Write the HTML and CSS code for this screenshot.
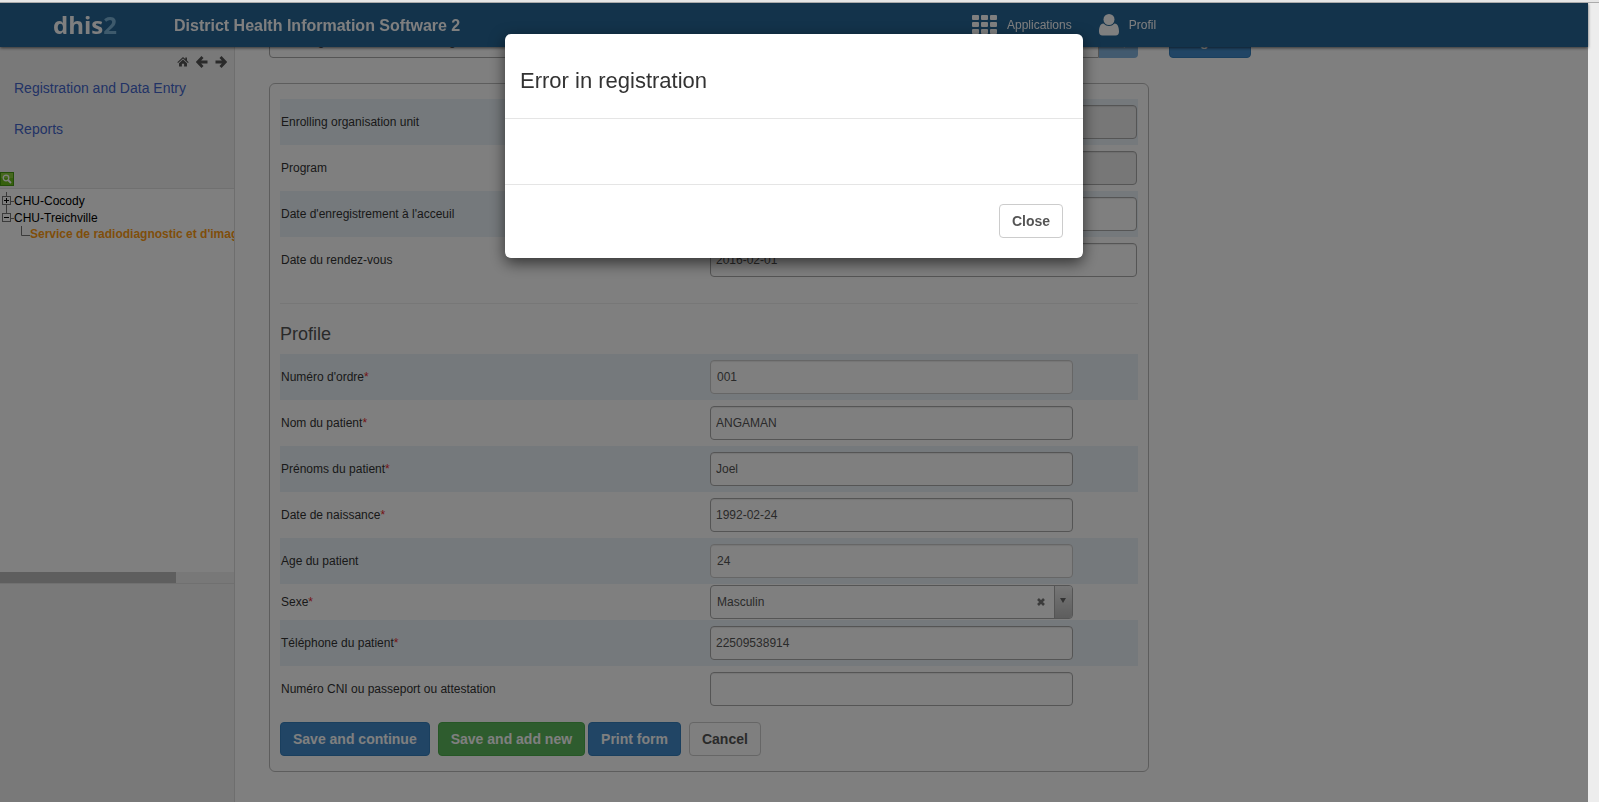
FILE: index.html
```html
<!DOCTYPE html>
<html lang="fr">
<head>
    <meta charset="UTF-8">
    <meta name="viewport" content="width=device-width, initial-scale=1" />
    <title>District Health Information Software 2</title>
    <link rel="stylesheet" href="styles.css">
</head>
<body>

<header id="header">
    <a href="#" class="logo">dhis<span>2</span></a>
    <span class="title">District Health Information Software 2</span>
    <nav class="menu">
        <a href="#">
            <svg width="25" height="20" viewBox="0 0 25 20" fill="#fff">
                <rect x="0" y="0" width="7" height="5" rx="1"/><rect x="9" y="0" width="7" height="5" rx="1"/><rect x="18" y="0" width="7" height="5" rx="1"/>
                <rect x="0" y="7" width="7" height="5" rx="1"/><rect x="9" y="7" width="7" height="5" rx="1"/><rect x="18" y="7" width="7" height="5" rx="1"/>
                <rect x="0" y="14" width="7" height="5" rx="1"/><rect x="9" y="14" width="7" height="5" rx="1"/><rect x="18" y="14" width="7" height="5" rx="1"/>
            </svg>
            Applications
        </a>
        <a href="#">
            <svg width="20" height="22" viewBox="0 0 20 22" fill="#fff">
                <circle cx="10" cy="5.5" r="5.5"/>
                <path d="M4.5 9.500Q7 12 10 12T15.500 9.500C19 9.500 20 14 20 17.500Q20 21.500 16.500 21.500H3.500Q0 21.500 0 17.500C0 14 1 9.500 4.500 9.500Z"/>
            </svg>
            Profil
        </a>
    </nav>
</header>

<div id="layout">
    <aside id="sidebar">
        <div class="nav-icons">
            <a href="#" aria-label="Home"><svg width="12" height="12" viewBox="0 0 13 12" fill="#555"><path d="M6.500 0.500L0.300 6.200L1.200 7.100L6.500 2.300L11.800 7.100L12.700 6.200L10.800 4.500V1H9V2.800Z"/><path d="M6.500 3.400L2.200 7.300V11H5.300V7.800H7.700V11H10.800V7.300Z"/></svg></a>
            <a href="#" aria-label="Back"><svg width="12" height="12" viewBox="0 0 12 12" fill="none" stroke="#555" stroke-width="2.800"><path d="M6.500 1L1.800 6L6.500 11M2 6H11.500"/></svg></a>
            <a href="#" aria-label="Forward"><svg width="12" height="12" viewBox="0 0 12 12" fill="none" stroke="#555" stroke-width="2.800"><path d="M5.500 1L10.200 6L5.500 11M10 6H0.500"/></svg></a>
        </div>
        <ul class="links">
            <li><a href="#">Registration and Data Entry</a></li>
            <li><a href="#">Reports</a></li>
        </ul>
        <button type="button" class="find" aria-label="Search">
            <svg width="14" height="14" viewBox="0 0 14 14"><rect x=".5" y=".5" width="13" height="13" fill="#6cc01c" stroke="#469c10"/><rect x="1" y="1" width="12" height="5" fill="#8cd03c"/><circle cx="6" cy="6" r="2.800" fill="none" stroke="#fff" stroke-width="1.300"/><path d="M8 8L11 11" stroke="#fff" stroke-width="1.800"/></svg>
        </button>
        <div class="tree">
            <ul>
                <li>
                    <svg width="14" height="17" viewBox="0 0 14 17" fill="none"><path d="M6.500 0V4M6.500 13V17M11 9.500H14" stroke="#777"/><rect x="2.500" y="4.500" width="8" height="8" stroke="#777"/><path d="M4 8.500H9M6.500 6V11" stroke="#000"/></svg>
                    <a href="#">CHU-Cocody</a>
                </li>
                <li>
                    <svg width="14" height="17" viewBox="0 0 14 17" fill="none"><path d="M6.500 0V4M11 9.500H14" stroke="#777"/><rect x="2.500" y="4.500" width="8" height="8" stroke="#777"/><path d="M4 8.500H9" stroke="#000"/></svg>
                    <a href="#">CHU-Treichville</a>
                </li>
                <li class="child">
                    <svg width="9" height="16" viewBox="0 0 9 16" fill="none"><path d="M.5 0V9.500H9" stroke="#777"/></svg>
                    <a href="#" class="selected">Service de radiodiagnostic et d'imagerie</a>
                </li>
            </ul>
            <div class="scrollbar"><div class="thumb"></div></div>
        </div>
    </aside>

    <main id="main">
        <div class="toolbar">
            <input type="text" class="form-control program" aria-label="Program list" value="Radiologie et traitement des images">
            <button type="button" class="btn btn-go" aria-label="Search"><svg width="14" height="14" viewBox="0 0 14 14" fill="none" stroke="#fff" stroke-width="2"><circle cx="6" cy="6" r="4.500"/><path d="M9 9L13 13"/></svg></button>
            <button type="button" class="btn btn-primary register">Register</button>
        </div>

        <form class="panel">
            <table class="fields wide">
                <tr>
                    <td><label for="orgunit">Enrolling organisation unit</label></td>
                    <td><input id="orgunit" type="text" class="form-control" disabled></td>
                </tr>
                <tr>
                    <td><label for="program">Program</label></td>
                    <td><input id="program" type="text" class="form-control" disabled></td>
                </tr>
                <tr>
                    <td><label for="enrolled">Date d'enregistrement à l'acceuil</label></td>
                    <td><input id="enrolled" type="text" class="form-control"></td>
                </tr>
                <tr>
                    <td><label for="appointment">Date du rendez-vous</label></td>
                    <td><input id="appointment" type="text" class="form-control" value="2016-02-01"></td>
                </tr>
            </table>
            <hr>
            <h3>Profile</h3>
            <table class="fields">
                <tr>
                    <td><label for="order">Numéro d'ordre<em>*</em></label></td>
                    <td><input id="order" type="text" class="form-control light" value="001"></td>
                </tr>
                <tr>
                    <td><label for="lastname">Nom du patient<em>*</em></label></td>
                    <td><input id="lastname" type="text" class="form-control" value="ANGAMAN"></td>
                </tr>
                <tr>
                    <td><label for="firstname">Prénoms du patient<em>*</em></label></td>
                    <td><input id="firstname" type="text" class="form-control" value="Joel"></td>
                </tr>
                <tr>
                    <td><label for="birth">Date de naissance<em>*</em></label></td>
                    <td><input id="birth" type="text" class="form-control" value="1992-02-24"></td>
                </tr>
                <tr>
                    <td><label for="age">Age du patient</label></td>
                    <td><input id="age" type="text" class="form-control light" value="24"></td>
                </tr>
                <tr class="tight">
                    <td><label for="sex">Sexe<em>*</em></label></td>
                    <td>
                        <div class="select">
                            <select id="sex"><option>Masculin</option></select>
                            <button type="button" class="clear" aria-label="Clear"><svg width="8" height="8" viewBox="0 0 8 8" stroke="#777" stroke-width="2.600"><path d="M1 1L7 7M7 1L1 7"/></svg></button>
                            <span class="arrow"><svg width="6" height="5" viewBox="0 0 6 5" fill="#666"><path d="M0 0H6L3 5Z"/></svg></span>
                        </div>
                    </td>
                </tr>
                <tr>
                    <td><label for="phone">Téléphone du patient<em>*</em></label></td>
                    <td><input id="phone" type="text" class="form-control" value="22509538914"></td>
                </tr>
                <tr>
                    <td><label for="cni">Numéro CNI ou passeport ou attestation</label></td>
                    <td><input id="cni" type="text" class="form-control"></td>
                </tr>
            </table>
            <div class="actions">
                <button type="button" class="btn btn-primary">Save and continue</button>
                <div class="pair">
                    <button type="button" class="btn btn-success">Save and add new</button>
                    <button type="button" class="btn btn-primary">Print form</button>
                </div>
                <button type="button" class="btn btn-default">Cancel</button>
            </div>
        </form>
    </main>
</div>

<div id="backdrop">
    <div class="modal" role="dialog" aria-labelledby="modal-title">
        <div class="modal-header"><h2 id="modal-title">Error in registration</h2></div>
        <div class="modal-body"></div>
        <div class="modal-footer"><button type="button" class="btn btn-default">Close</button></div>
    </div>
</div>

</body>
</html>
```

FILE: styles.css
```css
*, *::after, *::before {
    box-sizing: border-box;
}

html {
    background: #ededed;
}

body {
    margin: 0 11px 0 0;
    padding-top: 3px;
    font-family: "Liberation Sans", Arial, sans-serif;
    font-size: 12px;
    line-height: 16px;
    color: #333;
}

/* window edge above the page */
body::before {
    content: "";
    position: fixed;
    top: 0;
    left: 0;
    right: 0;
    height: 3px;
    background: #e6e6e6;
    border-bottom: 1px solid #ababab;
    z-index: 20;
}

a {
    color: inherit;
    text-decoration: none;
}

ul {
    list-style: none;
    margin: 0;
    padding: 0;
}

svg {
    display: block;
    flex: none;
}

/* header */

#header {
    position: fixed;
    top: 3px;
    left: 0;
    right: 11px;
    height: 44px;
    display: flex;
    align-items: center;
    background: #276696;
    color: #fff;
    box-shadow: 0 1px 3px rgba(0, 0, 0, 0.6);
    z-index: 5;
}

.logo {
    width: 121px;
    margin-left: 53px;
    font: bold 24px/32px "Open Sans", "Noto Sans", sans-serif;
}

.logo span {
    color: #7cb4d8;
}

.title {
    width: 798px;
    padding-top: 2px;
    font-size: 16px;
    font-weight: bold;
}

.menu {
    display: flex;
    gap: 27px;
}

.menu a {
    display: flex;
    align-items: center;
    gap: 10px;
}

/* left bar */

#layout {
    display: flex;
    min-height: calc(100vh - 3px);
    background: #fff;
}

#sidebar {
    flex: none;
    width: 235px;
    padding-top: 53px;
    background: #f3f3f3;
    border-right: 1px solid #ddd;
}

.nav-icons {
    display: flex;
    justify-content: flex-end;
    gap: 7px;
    padding-right: 7px;
}

.links {
    padding: 10px 14px 11px;
    font-size: 14px;
    color: #4466cc;
}

.links li {
    padding-bottom: 21px;
    line-height: 20px;
}

.find {
    display: block;
    margin-top: 1px;
    padding: 0;
    border: 0;
    background: none;
}

.tree {
    display: flex;
    flex-direction: column;
    height: 396px;
    margin-top: 2px;
    background: #fff;
    border: 1px solid #e0e0e0;
    border-width: 1px 0;
    color: #000;
}

.tree ul {
    flex: 1;
    padding-top: 3px;
    overflow: hidden;
    white-space: nowrap;
}

.tree li {
    display: flex;
    align-items: center;
    height: 17px;
}

.tree .child {
    height: 16px;
    padding-left: 21px;
}

.tree .selected {
    color: #ff9c14;
    font-weight: bold;
}

.scrollbar {
    height: 11px;
    background: #f1f1f1;
}

.thumb {
    width: 75%;
    height: 11px;
    background: #bcbcbc;
}

/* form */

#main {
    flex: 1;
    padding: 21px 34px 30px;
}

.toolbar {
    display: flex;
    height: 34px;
    margin-bottom: 25px;
}

.form-control {
    display: block;
    width: 100%;
    height: 34px;
    padding: 6px 5px;
    font: inherit;
    color: #555;
    background: #fff;
    border: 1px solid #aaa;
    border-radius: 4px;
    box-shadow: inset 0 1px 1px rgba(0, 0, 0, 0.08);
}

.form-control:disabled {
    background: #eee;
}

.form-control.light {
    padding-left: 6px;
    border-color: #ccc;
}

.toolbar .program {
    width: 830px;
    padding-left: 7px;
    border-radius: 4px 0 0 4px;
}

.btn {
    height: 34px;
    padding: 6px 12px;
    border: 1px solid transparent;
    border-radius: 4px;
    font: bold 14px/20px "Liberation Sans", Arial, sans-serif;
    color: #fff;
}

.btn-primary {
    background: #428bca;
    border-color: #357ebd;
}

.btn-success {
    background: #5cb85c;
    border-color: #4cae4c;
}

.btn-default {
    background: #fff;
    border-color: #ccc;
    color: #555;
}

.btn-go {
    width: 39px;
    background: #85b5de;
    border-radius: 0 4px 4px 0;
}

.toolbar .register {
    margin-left: 31px;
}

.panel {
    max-width: 880px;
    padding: 15px 10px;
    border: 1px solid #bbb;
    border-radius: 6px;
}

.fields {
    width: 100%;
    border-collapse: collapse;
    table-layout: fixed;
}

.fields td {
    height: 46px;
    padding: 0 1px;
}

.fields .tight td {
    height: 36px;
}

.fields tr:nth-child(odd) {
    background: #ebf3f9;
}

.fields .form-control,
.select {
    width: 85%;
}

.fields.wide .form-control {
    width: 100%;
}

em {
    color: #e8282c;
    font-style: normal;
}

.select {
    display: flex;
    align-items: center;
    height: 34px;
    border: 1px solid #aaa;
    border-radius: 4px;
    overflow: hidden;
}

.select select {
    flex: 1;
    padding: 0 6px;
    appearance: none;
    border: 0;
    background: none;
    font: inherit;
    color: #555;
}

.clear {
    padding: 0;
    margin-right: 9px;
    border: 0;
    background: none;
}

.arrow {
    display: flex;
    align-items: center;
    justify-content: center;
    width: 18px;
    height: 32px;
    padding-bottom: 4px;
    border-left: 1px solid #aaa;
    background: linear-gradient(#eee, #bbb);
}

hr {
    margin: 20px 0;
    border: 0;
    border-top: 1px solid #eee;
}

h3 {
    margin: 0 0 10px;
    font-size: 18px;
    font-weight: normal;
    line-height: 20px;
    color: #555;
}

.actions {
    display: flex;
    gap: 8px;
    padding-top: 10px;
}

.pair {
    display: flex;
    gap: 3px;
}

/* error dialog */

#backdrop {
    position: fixed;
    top: 3px;
    left: 0;
    right: 11px;
    bottom: 0;
    padding-top: 31px;
    background: rgba(0, 0, 0, 0.5);
    z-index: 10;
}

.modal {
    max-width: 578px;
    margin: 0 auto;
    background: #fff;
    border-radius: 6px;
    box-shadow: 0 5px 15px rgba(0, 0, 0, 0.6);
}

.modal-header {
    padding: 35px 15px 25px;
}

.modal-header h2 {
    margin: 0;
    font-size: 22px;
    font-weight: normal;
    line-height: 24px;
}

.modal-body {
    height: 66px;
    border-top: 1px solid #e5e5e5;
}

.modal-footer {
    padding: 19px 20px 20px;
    border-top: 1px solid #e5e5e5;
    text-align: right;
}
```
